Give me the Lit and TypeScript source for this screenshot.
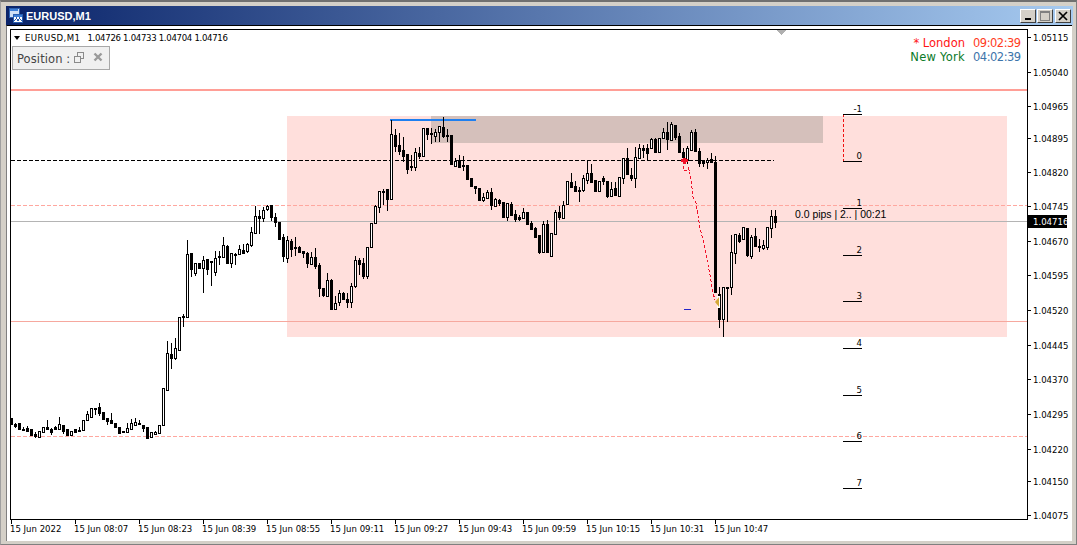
import { LitElement, html, css, svg } from "lit";
import { customElement } from "lit/decorators.js";

// rows: [bodyTop, bodyBottom, bear(1)/bull(0), high?, low?] in units of 1/3 px from yBase
type Row = [number, number, number, number?, number?];
const groups: { x0: number; y0: number; rows: Row[] }[] = [
  { x0: 11, y0: 380, rows: [
    [115,132,1,113,135],[131,137,1,129,145],[130,147,1,129,149],[146,148,1,140,150],[144,152,1,138,153],[148,164,1],[162,168,1,155,174],[154,170,0,154,174],[142,155,0],[142,146,1,120,148],[147,157,1,143,164],[142,146,1,137,150],[133,146,0,111,150],[136,152,1,136,161],[148,164,1],[152,164,0],[148,155,1],[151,153,1,140,156],[121,150,0],[103,120,0,93,123],[85,110,0],[85,88,1,85,105],[82,98,1,70,108],[97,116,1],[115,122,1,115,135],[121,128,1,100,133],[128,140,1,128,143],[142,158,1],[154,157,1],[145,157,0,130,157],[129,146,0,118,146],[127,136,0,115,136],[128,133,1,120,136],[136,143,1,136,155],[141,175,1],[157,171,0,157,174],[157,163,0,153,166],[136,158,0],[25,136,0],
  ]},
  { x0: 167, y0: 300, rows: [
    [160,270,0,123,272],[163,173,1,128,208],[145,174,0,115,180],[52,150,0],[47,51,1,42,82],
  ]},
  { x0: 187, y0: 200, rows: [
    [162,350,0,120,353],[160,208,1,160,230],[190,218,0,190,228],[190,203,1],[181,203,0,168,278],[178,208,1,178,225],[182,186,1,182,258],[175,215,0,153,228],[168,172,1,152,195],[136,172,0,111,172],[138,190,1,135,190],[160,190,0,160,203],[162,166,1,160,195],[148,163,0,136,163],[151,160,1,132,163],[132,153,0,128,158],[97,134,0,82,140],[49,98,0,18,101],[48,53,1,30,103],[31,55,0,22,65],[18,28,0,14,33],[14,52,1,14,62],[52,65,1,40,82],[66,117,1,66,120],[112,167,1,103,186],[121,173,0,108,190],[124,146,1,118,172],[142,144,1,110,168],[142,155,1,138,157],[153,160,1,153,175],[160,190,1,155,203],[172,191,0,155,195],[172,197,1,143,208],[196,265,1,188,290],[265,285,1,265,290],[241,287,0,220,292],[241,326,1,238,326],
  ]},
  { x0: 335, y0: 180, rows: [
    [370,387,0,347,387],[340,367,0,330,378],[340,356,1,336,360],[356,367,1,340,385],[319,367,0,310,385],[241,319,0,228,325],[241,251,1,235,285],[250,288,1,235,297],[201,287,0,201,298],[130,200,0],[79,128,0,75,132],[34,82,0,34,98],[33,35,1,27,75],[27,58,1,27,92],
  ]},
  { x0: 391, y0: 105, rows: [
    [88,283,0,45,283],[90,122,1,72,142],[120,137,1,85,150],[136,153,1,97,172],[148,192,1,148,207],[183,186,0,150,197],[142,186,0,130,198],[145,152,1,127,162],[70,152,0,68,155],[70,88,1,70,105],[85,88,1,70,117],[82,93,0,72,112],[64,80,0,64,112],[67,93,1,35,98],[90,92,1,72,110],
  ]},
  { x0: 451, y0: 150, rows: [
    [-45,41,1],[33,47,0,25,47],[30,50,1,15,55],[46,49,1,17,63],[45,87,1],[85,107,1],[109,113,1,109,133],[115,150,1,115,153],[142,150,0,130,155],[127,143,0,120,147],[127,165,1,115,180],[147,167,0,143,170],[150,158,1,148,168],[157,200,1],[160,200,0,160,213],[162,194,1,155,194],[192,207,1,180,216],[202,206,1,195,212],[187,204,0,175,204],[186,222,1],[218,236,1,214,236],[234,260,1,230,265],[255,307,1,255,312],[222,307,0,212,310],[222,305,1,210,305],[250,318,0,248,320],[185,251,0,180,255],[186,200,1,168,210],[166,204,0,153,208],[94,163,0],[95,110,1,70,115],[108,122,1,92,125],[120,124,1,112,155],[85,121,0,75,125],[70,90,0,30,103],[70,95,1,42,97],[90,122,1,90,127],[92,122,0,92,127],[83,92,1,79,105],[93,137,1,93,145],[118,137,0,95,140],[115,135,1,95,138],[82,137,0],
  ]},
  { x0: 623, y0: 105, rows: [
    [160,220,0,160,237],[160,208,1,130,208],[210,218,1,190,228],[157,218,0,125,250],[130,160,0,118,160],[130,135,1,120,160],[128,145,1,118,165],[103,130,0,100,130],[102,141,1,100,145],[100,140,0],[82,100,0,70,100],[82,102,1,50,135],[58,105,0,52,105],[60,95,1,60,105],[92,142,1,85,145],[142,157,1,130,178],[130,165,0,122,178],[80,135,0,75,135],[82,138,1,72,140],[138,173,1,130,185],[168,173,1,168,185],[165,172,0,158,193],[162,172,1,145,172],[172,560,1,153,560],
  ]},
  { x0: 719, y0: 215, rows: [
    [238,312,1,215,340],[217,313,0,217,367],[215,217,0,215,320],[111,216,0,60,240],[57,113,0,57,147],[60,77,1,55,85],[37,73,0,35,73],[40,120,1,40,125],[67,122,0,60,132],[63,92,1,40,92],[93,97,1,73,110],[91,100,0,75,105],[37,95,0,37,105],[2,40,0,-15,68],[2,20,1,-15,38],
  ]},
];

const prices: [string, number][] = [
  ["1.05115",38],["1.05040",73],["1.04965",107],["1.04895",139],["1.04820",173],["1.04745",207],
  ["1.04670",242],["1.04595",276],["1.04520",311],["1.04445",346],["1.04370",380],["1.04295",415],
  ["1.04220",450],["1.04150",482],["1.04075",516],
];
const times = ["15 Jun 2022","15 Jun 08:07","15 Jun 08:23","15 Jun 08:39","15 Jun 08:55","15 Jun 09:11","15 Jun 09:27","15 Jun 09:43","15 Jun 09:59","15 Jun 10:15","15 Jun 10:31","15 Jun 10:47"];
const fibs: [string, number][] = [["-1",114],["0",161],["1",208],["2",255],["3",301],["4",348],["5",395],["6",441],["7",488]];

function candles() {
  const out: unknown[] = [];
  for (const g of groups) {
    g.rows.forEach((r, i) => {
      const x = g.x0 + 4 * i;
      const py = (v: number) => Math.round(g.y0 + v / 3);
      const top = py(r[0]);
      const bot = Math.max(py(r[1]), top + 1);
      const hi = py(r[3] ?? r[0]);
      const lo = py(r[4] ?? r[1]);
      out.push(svg`<rect x=${x} y=${hi} width="1" height=${Math.max(lo - hi, 1)} fill="#000"/>`);
      out.push(svg`<rect x=${x - 1} y=${top} width="3" height=${bot - top + 1} fill="#000"/>`);
      if (!r[2] && bot - top > 1) out.push(svg`<rect x=${x} y=${top + 1} width="1" height=${bot - top - 1} fill="#fff"/>`);
    });
  }
  return out;
}

@customElement("app-root")
export class AppRoot extends LitElement {
  static styles = css`
    :host { display: block; width: 1077px; height: 545px; overflow: hidden; }
    .window {
      box-sizing: border-box; width: 1077px; height: 545px; display: flex; flex-direction: column;
      background: #d4d0c8; padding: 4px 3px 3px 5px;
      border-top: 2px solid #707070; border-right: 1px solid #808080; border-bottom: 1px solid #808080; border-left: 1px solid #a0a0a0;
      font-family: "DejaVu Sans Condensed", "DejaVu Sans", sans-serif;
    }
    .title {
      height: 19px; flex: none; display: flex; align-items: center; gap: 3px; padding: 0 2px 0 3px;
      background: linear-gradient(90deg, #0a246a 0%, #a6caf0 100%);
      color: #fff; font: bold 11px "Liberation Sans", sans-serif;
    }
    .title svg.logo { flex: none; display: block; }
    .title .name { flex: 1; }
    .btns { display: flex; gap: 0; }
    .btn {
      box-sizing: border-box; width: 16px; height: 14px; background: #d4d0c8; margin-left: 1px;
      border-top: 1px solid #fff; border-left: 1px solid #fff; border-right: 1px solid #404040; border-bottom: 1px solid #404040;
      display: flex; align-items: center; justify-content: center;
    }
    .btn.close { margin-left: 2px; }
    .client {
      flex: 1; background: #fff; margin-right: 1px; padding: 3px 0 0 3px; min-height: 0;
      border-top: 1px solid #000; border-left: 1px solid #808080;
      box-sizing: border-box; display: grid; grid-template-columns: 1018px 1fr; grid-template-rows: 491px 1fr;
    }
    .chart { position: relative; box-sizing: border-box; border: 1px solid #000; overflow: hidden; }
    .chart > svg { display: block; }
    .legend {
      position: absolute; left: 3px; top: 2px; display: flex; align-items: center; gap: 5px;
      font-size: 9.5px; line-height: 12px; color: #000; white-space: nowrap;
    }
    .legend .tri { width: 0; height: 0; border-left: 3.5px solid transparent; border-right: 3.5px solid transparent; border-top: 4px solid #000; }
    .legend .sym { letter-spacing: 0.45px; }
    .legend .ohlc { margin-left: 2px; letter-spacing: -0.3px; }
    .panel {
      position: absolute; left: 1px; top: 16px; box-sizing: border-box; width: 98px; height: 24px;
      background: #f0f0f0; border: 1px solid #a8a8a8; display: flex; align-items: center; padding: 1px 0 0 4px;
      font: 11.5px "DejaVu Sans", sans-serif; color: #444; letter-spacing: 0.1px;
    }
    .panel svg { position: absolute; left: 0; top: 0; display: block; }
    .clock {
      position: absolute; right: 7px; top: 6px; display: grid; grid-template-columns: auto 47px; column-gap: 8px;
      font: 11.5px/14px "DejaVu Sans", sans-serif; text-align: right;
    }
    .clock .t { letter-spacing: -0.5px; }
    .ny { letter-spacing: 0.25px; }
    .lon { color: #ff1414; }
    .lont { color: #ff3c1e; }
    .ny { color: #0a7a28; }
    .nyt { color: #3c74aa; }
    .prices { position: relative; }
    .tick { position: absolute; background: #000; }
    .plabel { position: absolute; left: 5px; font-size: 9.5px; line-height: 12px; color: #000; }
    .current { position: absolute; left: 0; width: 39px; height: 13px; background: #000; color: #fff; font-size: 9.5px; line-height: 13px; padding-left: 5px; box-sizing: border-box; white-space: nowrap; }
    .times { position: relative; }
    .tlabel { position: absolute; top: 3px; font-size: 9.5px; line-height: 12px; color: #000; white-space: nowrap; }
    .fib { font: 9.5px "DejaVu Sans Condensed", "DejaVu Sans", sans-serif; fill: #000; text-anchor: end; }
    .pips { font: 10.45px "Liberation Sans", sans-serif; fill: #000; }
  `;

  render() {
    return html`<div class="window">
      <div class="title">
        <svg class="logo" width="14" height="15" viewBox="0 0 14 15" shape-rendering="crispEdges">
          <rect x="0" y="0" width="10" height="9" fill="#cfe0f5" stroke="#2a5fb0"/>
          <rect x="1" y="1" width="8" height="2" fill="#3d7fd6"/>
          <rect x="4" y="6" width="9.5" height="8.5" fill="#fff" stroke="#2a5fb0"/>
          <rect x="5" y="7" width="8" height="2" fill="#3d7fd6"/>
          <path d="M5.5 13 L7.5 10 L9 12.5 L10.5 10 L12.5 13" fill="none" stroke="#2a5fb0"/>
        </svg>
        <span class="name">EURUSD,M1</span>
        <div class="btns">
          <div class="btn"><svg width="10" height="10" viewBox="0 0 10 10" shape-rendering="crispEdges"><rect x="2" y="7" width="6" height="2" fill="#000"/></svg></div>
          <div class="btn"><svg width="12" height="10" viewBox="0 0 12 10" shape-rendering="crispEdges"><rect x="1.5" y="0.5" width="9" height="9" fill="none" stroke="#808080"/><rect x="1" y="0" width="10" height="2" fill="#808080"/></svg></div>
          <div class="btn close"><svg width="10" height="10" viewBox="0 0 10 10"><path d="M1 1 L9 9 M9 1 L1 9" stroke="#000" stroke-width="1.7"/></svg></div>
        </div>
      </div>
      <div class="client">
        <div class="chart">
          <svg width="1016" height="489" viewBox="11 30 1016 489" shape-rendering="crispEdges">
            <rect x="287" y="116" width="720" height="221" fill="#ffdfdc"/>
            <rect x="431" y="116" width="392" height="27" fill="#d5c0bb"/>
            <rect x="11" y="89" width="1016" height="2" fill="#ff9e96"/>
            <line x1="11" y1="205.5" x2="1027" y2="205.5" stroke="#ffa79f" stroke-dasharray="4 2"/>
            <rect x="11" y="221" width="1016" height="1" fill="#b4b4b4"/>
            <rect x="11" y="321" width="1016" height="1" fill="#f6a89e"/>
            <line x1="11" y1="436.5" x2="1027" y2="436.5" stroke="#ffa79f" stroke-dasharray="4 2"/>
            <line x1="11" y1="160.5" x2="774" y2="160.5" stroke="#000" stroke-dasharray="4 2"/>
            <rect x="390" y="119" width="86" height="2" fill="#1e7ff0"/>
            <polygon points="776,30 786,30 781,35" fill="#b0b0b0"/>
            ${candles()}
            <line x1="843.5" y1="114" x2="843.5" y2="161" stroke="#f01010" stroke-dasharray="3 2"/>
            ${fibs.map(([t, y]) => svg`
              <rect x="843" y=${y} width="19" height="1" fill="#000"/>
              <text class="fib" x="862" y=${y - 2} shape-rendering="auto">${t}</text>`)}
            <path d="M683.5 161 V170.5 H690 M688.3 166.7 L690.7 176.7 L693 196.7 L696 203.3 L700 228 L703 240 L706.7 258 L710 275 L713 293 L715 300"
              fill="none" stroke="#f01028" stroke-dasharray="3 2"/>
            <path d="M683 158 h3 v1 h2 v3 h-2 v2 h-3 v-2 h-2 v-3 h2 z" fill="#f01028"/>
            <rect x="684" y="309" width="7" height="1" fill="#2424c8"/>
            <rect x="717" y="296" width="3" height="12" fill="#fff"/>
            <polygon points="715,302 719,297 719,307" fill="#d4a838" shape-rendering="auto"/>
            <text class="pips" x="795" y="218" shape-rendering="auto">0.0 pips | 2.. | 00:21</text>
          </svg>
          <div class="legend">
            <span class="tri"></span>
            <span class="sym">EURUSD,M1</span>
            <span class="ohlc">1.04726 1.04733 1.04704 1.04716</span>
          </div>
          <div class="panel">
            <span>Position :</span>
            <svg width="96" height="22" viewBox="0 0 96 22" shape-rendering="crispEdges">
              <path d="M61.5 9.500 h6 v6 h-6 z M64.500 9 v-3.500 h6 v6 h-3" fill="none" stroke="#8a8a8a"/>
              <path d="M81.500 6.500 L88.500 13.500 M88.500 6.500 L81.500 13.500" stroke="#9a9a9a" stroke-width="2.400" shape-rendering="auto"/>
            </svg>
          </div>
          <div class="clock">
            <span class="lon">* London</span><span class="lont t">09:02:39</span>
            <span class="ny">New York</span><span class="nyt t">04:02:39</span>
          </div>
        </div>
        <div class="prices">
          ${prices.map(([t, y]) => html`
            <div class="tick" style="left:0;top:${y - 29 - 1}px;width:3px;height:1px"></div>
            <div class="plabel" style="top:${y - 29 - 6}px">${t}</div>`)}
          <div class="current" style="top:${215 - 29}px">1.04716</div>
        </div>
        <div class="times">
          ${times.map((t, i) => html`
            <div class="tick" style="left:${1 + 64 * i}px;top:0;width:1px;height:4px"></div>
            <div class="tlabel" style="left:${64 * i}px">${t}</div>`)}
        </div>
      </div>
    </div>`;
  }
}
